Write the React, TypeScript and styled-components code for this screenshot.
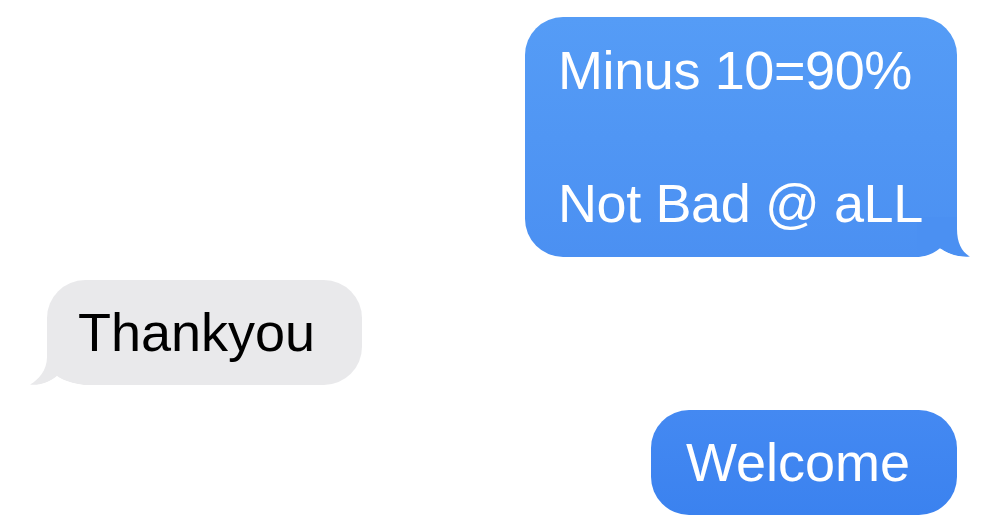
import React from "react";
import styled, { createGlobalStyle } from "styled-components";

const Global = createGlobalStyle`
  html, body { margin: 0; padding: 0; background: #ffffff; }
  body { width: 1000px; height: 517px; overflow: hidden; }
`;

const Thread = styled.div`
  display: flex;
  flex-direction: column;
  width: 1000px;
  height: 517px;
  padding-top: 17px;
  box-sizing: border-box;
  font-family: "Liberation Sans", Arial, sans-serif;
  font-size: 54px;
`;

const Row = styled.div<{ $side: "left" | "right"; $gap: number }>`
  display: flex;
  justify-content: ${(p) => (p.$side === "right" ? "flex-end" : "flex-start")};
  padding: 0 43px 0 47px;
  margin-top: ${(p) => p.$gap}px;
`;

const Bubble = styled.div<{
  $kind: "sent" | "received";
  $padL: number;
  $padR: number;
  $top: string;
  $bottom: string;
  $width?: number;
}>`
  position: relative;
  box-sizing: border-box;
  ${(p) => (p.$width ? `width: ${p.$width}px;` : "")}
  padding: 20px ${(p) => p.$padR}px 20px ${(p) => p.$padL}px;
  border-radius: 38px;
  background: linear-gradient(to bottom, ${(p) => p.$top}, ${(p) => p.$bottom});
  color: ${(p) => (p.$kind === "sent" ? "#ffffff" : "#000000")};
  line-height: 66.5px;
  white-space: pre;
`;

const Pill = styled(Bubble)`
  height: 105px;
  padding-top: 0;
  padding-bottom: 0;
  display: flex;
  align-items: center;
  line-height: 60px;
`;

const Text = styled.span<{ $tight?: boolean }>`
  position: relative;
  z-index: 1;
  letter-spacing: ${(p) => (p.$tight ? "-0.4px" : "0")};
`;

const TailSvg = styled.svg<{ $side: "left" | "right" }>`
  position: absolute;
  bottom: 0;
  ${(p) => (p.$side === "right" ? "right: -16px;" : "left: -16px; transform: scaleX(-1);")}
  width: 56px;
  height: 40px;
  overflow: visible;
`;

const Tail = ({
  side,
  color,
  tipX = 53,
  notchX = 23,
}: {
  side: "left" | "right";
  color: string;
  tipX?: number;
  notchX?: number;
}) => (
  <TailSvg $side={side} viewBox="0 0 56 40">
    <path
      d={`M0 0 L40 0 L40 12 C40 26 ${tipX - 8} 35 ${tipX} 39.6 C${tipX - 10} 40.6 ${notchX + 8} 37.5 ${notchX} 31 C${notchX - 6} 36 9 39.4 0 40 Z`}
      fill={color}
    />
    <path
      d={`M0 40.2 C9 39.6 ${notchX - 6} 36.2 ${notchX} 31.2 C${notchX + 8} 37.7 ${tipX - 10} 40.8 ${tipX} 39.8 L${tipX + 3} 41 L0 41 Z`}
      fill="#ffffff"
    />
  </TailSvg>
);

export default function App() {
  return (
    <>
      <Global />
      <Thread>
        <Row $side="right" $gap={0}>
          <Bubble $kind="sent" $width={432} $padL={33} $padR={20} $top="#559cf6" $bottom="#4b90f2">
            <Tail side="right" color="#4b90f2" />
            <Text $tight>{"Minus 10=90%\n\nNot Bad @ aLL"}</Text>
          </Bubble>
        </Row>
        <Row $side="left" $gap={23}>
          <Pill $kind="received" $padL={31} $padR={47} $top="#e9e9eb" $bottom="#e9e9eb">
            <Tail side="left" color="#e9e9eb" tipX={57} notchX={30} />
            <Text>Thankyou</Text>
          </Pill>
        </Row>
        <Row $side="right" $gap={25}>
          <Pill $kind="sent" $padL={35} $padR={47} $top="#4489f2" $bottom="#3b82ef">
            <Text>Welcome</Text>
          </Pill>
        </Row>
      </Thread>
    </>
  );
}
